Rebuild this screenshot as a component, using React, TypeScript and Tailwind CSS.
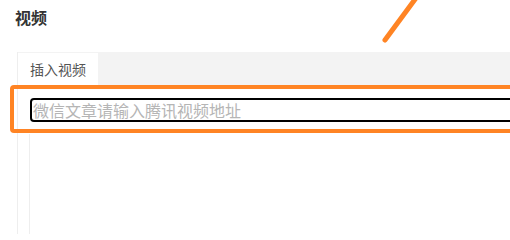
import React from "react";

const App = () => {
  return (
    <div className="relative w-[510px] h-[234px] overflow-hidden bg-white font-['Noto_Sans_CJK_SC',sans-serif]">
      {/* Title */}
      <div className="pt-[7px] pl-[15px] text-[16px] leading-[20px] font-bold text-[#333]">视频</div>

      {/* Panel */}
      <div className="mt-[25px] ml-[17px] border-l border-[#eeeeee]">
        <div className="flex h-[34px] bg-[#f3f3f3] pt-px">
          <div className="w-[80px] h-[33px] bg-white pl-[12px] text-[14px] leading-[33px] text-[#555]">插入视频</div>
        </div>
        <div className="pt-[12px] pl-[12px]">
          <div className="w-[520px] h-[24px] border-2 border-black rounded-[4px] flex items-center pl-px text-[16px] text-[#b5b5b5] whitespace-nowrap">
            微信文章请输入腾讯视频地址
          </div>
          <div className="mt-[12px] -ml-px h-[120px] border-l border-[#eeeeee]" />
        </div>
      </div>

      {/* Annotation overlay */}
      <div className="absolute left-[10px] top-[85px] w-[520px] h-[48px] border-4 border-[#ff8424] rounded-[4px]" />
      <svg className="absolute left-0 top-0" width="510" height="60">
        <line x1="385" y1="40" x2="416" y2="-2" stroke="#ff8424" strokeWidth="5" strokeLinecap="round" />
      </svg>
    </div>
  );
};

export default App;
